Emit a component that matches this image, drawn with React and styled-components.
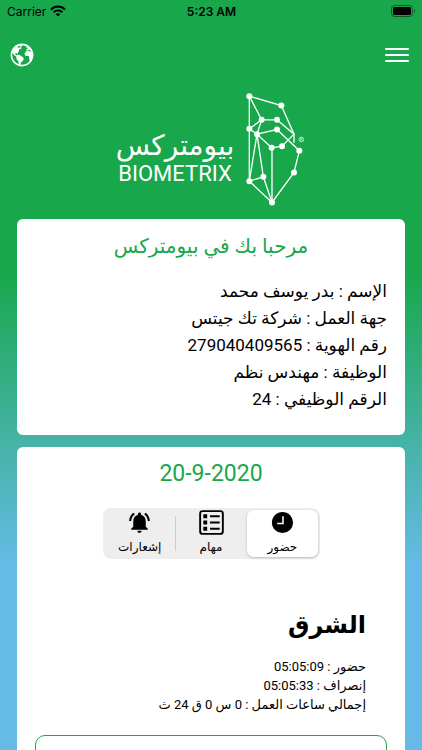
import React,{useState} from 'react'
import styled,{ createGlobalStyle } from 'styled-components'
import { IoEarth } from 'react-icons/io5'
import { MdNotificationsActive } from 'react-icons/md'

const green = '#18a74b'
const blue = '#65bbe5'

const GlobalStyle = createGlobalStyle`
  * {
    box-sizing: border-box;
  }
  html {
    scrollbar-width: none;
  }
  body {
    margin: 0;
    min-height: 100vh;
    background: linear-gradient(${green} 36%, ${blue} 75%) fixed;
    color: #000;
    font-family: Roboto, "DejaVu Sans", sans-serif;
  }
  h1, h2, h3, p, ul {
    margin: 0;
    padding: 0;
  }
`

const StatusBar = styled.div`
  display: grid;
  grid-template-columns: 1fr auto 1fr;
  align-items: center;
  height: 22px;
  padding: 0 6px 0 7px;
  font-family: Inter, sans-serif;
  font-size: 12px;
`

const Carrier = styled.div`
  display: flex;
  align-items: center;
  gap: 4px;
`

const Clock = styled.div`
  font-weight: 600;
`

const Battery = styled.svg`
  justify-self: end;
`

const TopBar = styled.header`
  display: flex;
  justify-content: space-between;
  align-items: center;
  height: 66px;
  padding: 0 13px 0 9px;
`

const IconButton = styled.button`
  display: flex;
  padding: 0;
  border: none;
  background: none;
  color: #fff;
  font-size: 26px;
  cursor: pointer;
`

const Brand = styled.div`
  display: flex;
  justify-content: center;
  align-items: center;
  gap: 12px;
  padding: 4px 0 12px;
  color: #fff;
`

const BrandText = styled.div`
  display: flex;
  flex-direction: column;
  align-items: center;
  padding-top: 14px;
`

const BrandArabic = styled.span`
  font-size: 28px;
  line-height: 34px;
`

const BrandLatin = styled.span`
  font-size: 22px;
  line-height: 22px;
`

const Main = styled.main`
  display: flex;
  flex-direction: column;
  gap: 12px;
  padding: 0 17px;
`

const Card = styled.section`
  padding: 12px 18px 22px;
  border-radius: 6px;
  background: #fff;
`

const CardTitle = styled.h2`
  color: ${green};
  font-size: ${(p) => p.$size};
  font-weight: 400;
  line-height: 30px;
  text-align: center;
`

const InfoList = styled.ul`
  margin-top: 17px;
  list-style: none;
  font-size: 17px;
  line-height: 27px;
`

const Segment = styled.div`
  display: flex;
  width: 217px;
  height: 51px;
  margin: 19px auto 0;
  padding: 2px;
  border-radius: 8px;
  background: #eee;
`

const Tab = styled.button`
  display: flex;
  flex: 1;
  flex-direction: column;
  align-items: center;
  justify-content: space-between;
  padding: 0;
  border: none;
  border-radius: 7px;
  background: ${(p) => (p.$active ? '#fff' : 'transparent')};
  box-shadow: ${(p) => (p.$active ? '0 1px 3px rgba(0, 0, 0, 0.2)' : 'none')};
  color: #000;
  font-family: inherit;
  font-size: 12px;
  line-height: 20px;
  cursor: pointer;

  svg {
    width: 25px;
    height: 25px;
  }
`

const Divider = styled.span`
  width: 1px;
  margin: 6px 0;
  background: ${(p) => (p.$hidden ? 'transparent' : '#ccc')};
`

const Shift = styled.div`
  padding: 46px 21px 0;
  font-size: 13px;
  line-height: 19px;
`

const Place = styled.h3`
  margin-bottom: 12px;
  font-size: 24px;
  line-height: 40px;
`

const NextShift = styled.div`
  min-height: 120px;
  margin-top: 21px;
  border: 1px solid ${green};
  border-radius: 10px;
`

function WifiIcon() {
  return (
    <svg width="16" height="12" viewBox="0 0 16 12" fill="none" stroke="#000" strokeWidth="2">
      <path d="M1 4.6C5 0.6 11 0.6 15 4.6" />
      <path d="M3.6 7.3C6.2 4.9 9.8 4.9 12.4 7.3" />
      <path d="M8 11.5L5.7 9.1C7 8 9 8 10.3 9.1Z" fill="#000" stroke="none" />
    </svg>
  )
}

function BatteryIcon() {
  return (
    <Battery width="25" height="12" viewBox="0 0 25 12">
      <rect x="0.5" y="0.5" width="21" height="11" rx="3" fill="none" stroke="#000" strokeOpacity="0.45" />
      <rect x="2" y="2" width="18" height="8" rx="1.5" />
      <path d="M23 4v4c1.4-0.6 1.4-3.4 0-4z" fillOpacity="0.5" />
    </Battery>
  )
}

function MenuIcon() {
  return (
    <svg width="24" height="16" viewBox="0 0 24 16" stroke="#fff" strokeWidth="2" strokeLinecap="round">
      <path d="M1 2h22M1 8h22M1 14h22" />
    </svg>
  )
}

const points = [
  [56, 34], [152, 62], [93, 105], [139, 105], [56, 132], [79, 148], [139, 134],
  [123, 189], [154, 184], [206, 198], [190, 263], [56, 289], [98, 276], [124, 353],
]

function BrandMark() {
  return (
    <svg width="60" height="115" viewBox="46 22 180 344" fill="none" stroke="#fff" strokeWidth="4">
      <path d="M56 289V34L152 62L190 148V174" />
      <path d="M56 34L93 105H139L190 148L154 184L123 189L79 148L139 134L206 198L190 263L124 353V189" />
      <path d="M93 105L56 132L79 148L93 105M79 148L56 289L98 276L79 148M98 276L124 353L56 289" />
      {points.map(([x, y]) => (
        <circle key={`${x}-${y}`} cx={x} cy={y} r="9" fill="#fff" stroke="none" />
      ))}
      <circle cx="212" cy="164" r="7" strokeWidth="2" />
      <path d="M210 168v-8h3a2 2 0 0 1 0 4h-3m3 0l2 4" strokeWidth="1.5" />
    </svg>
  )
}

function ClockIcon() {
  return (
    <svg viewBox="0 0 26 26">
      <circle cx="13" cy="13" r="11" />
      <path d="M13.5 6.5v7.5h-6" fill="none" stroke="#fff" strokeWidth="1.6" />
    </svg>
  )
}

function TasksIcon() {
  return (
    <svg viewBox="0 0 26 26">
      <rect x="1.2" y="1.2" width="23.6" height="23.6" rx="2.5" fill="none" stroke="#000" strokeWidth="2" />
      <path d="M4.5 4.5h4v4h-4zM4.5 11h4v4h-4zM4.5 17.5h4v4h-4z" />
      <path d="M11.5 6.5h10M11.5 13h10M11.5 19.5h10" stroke="#000" strokeWidth="2" />
    </svg>
  )
}

const info = [
  ['الإسم', 'بدر يوسف محمد'],
  ['جهة العمل', 'شركة تك جيتس'],
  ['رقم الهوية', '279040409565'],
  ['الوظيفة', 'مهندس نظم'],
  ['الرقم الوظيفي', '24'],
]

const tabs = [
  { id: 'attendance', label: 'حضور', Icon: ClockIcon },
  { id: 'tasks', label: 'مهام', Icon: TasksIcon },
  { id: 'alerts', label: 'إشعارات', Icon: MdNotificationsActive },
]

function App() {
  const [active, setActive] = useState('attendance')

  return (
    <>
      <GlobalStyle />
      <StatusBar>
        <Carrier>Carrier <WifiIcon /></Carrier>
        <Clock>5:23 AM</Clock>
        <BatteryIcon />
      </StatusBar>
      <TopBar>
        <IconButton aria-label="اللغة"><IoEarth /></IconButton>
        <IconButton aria-label="القائمة"><MenuIcon /></IconButton>
      </TopBar>
      <Brand>
        <BrandText>
          <BrandArabic lang="ar">بيومتركس</BrandArabic>
          <BrandLatin>BIOMETRIX</BrandLatin>
        </BrandText>
        <BrandMark />
      </Brand>
      <Main dir="rtl" lang="ar">
        <Card>
          <CardTitle $size="20px">مرحبا بك في بيومتركس</CardTitle>
          <InfoList>
            {info.map(([label, value]) => (
              <li key={label}>{label} : {value}</li>
            ))}
          </InfoList>
        </Card>
        <Card>
          <CardTitle $size="23px" dir="ltr">20-9-2020</CardTitle>
          <Segment role="tablist">
            {tabs.map(({ id, label, Icon }, i) => (
              <React.Fragment key={id}>
                {i > 0 && <Divider $hidden={active === tabs[i].id || active === tabs[i - 1].id} />}
                <Tab role="tab" aria-selected={active === id} $active={active === id} onClick={() => setActive(id)}>
                  <Icon />
                  {label}
                </Tab>
              </React.Fragment>
            ))}
          </Segment>
          <Shift>
            <Place>الشرق</Place>
            <p>حضور : <bdi>05:05:09</bdi></p>
            <p>إنصراف : <bdi>05:05:33</bdi></p>
            <p>إجمالي ساعات العمل : 0 س 0 ق 24 ث</p>
          </Shift>
          <NextShift />
        </Card>
      </Main>
    </>
  )
}

export default App
